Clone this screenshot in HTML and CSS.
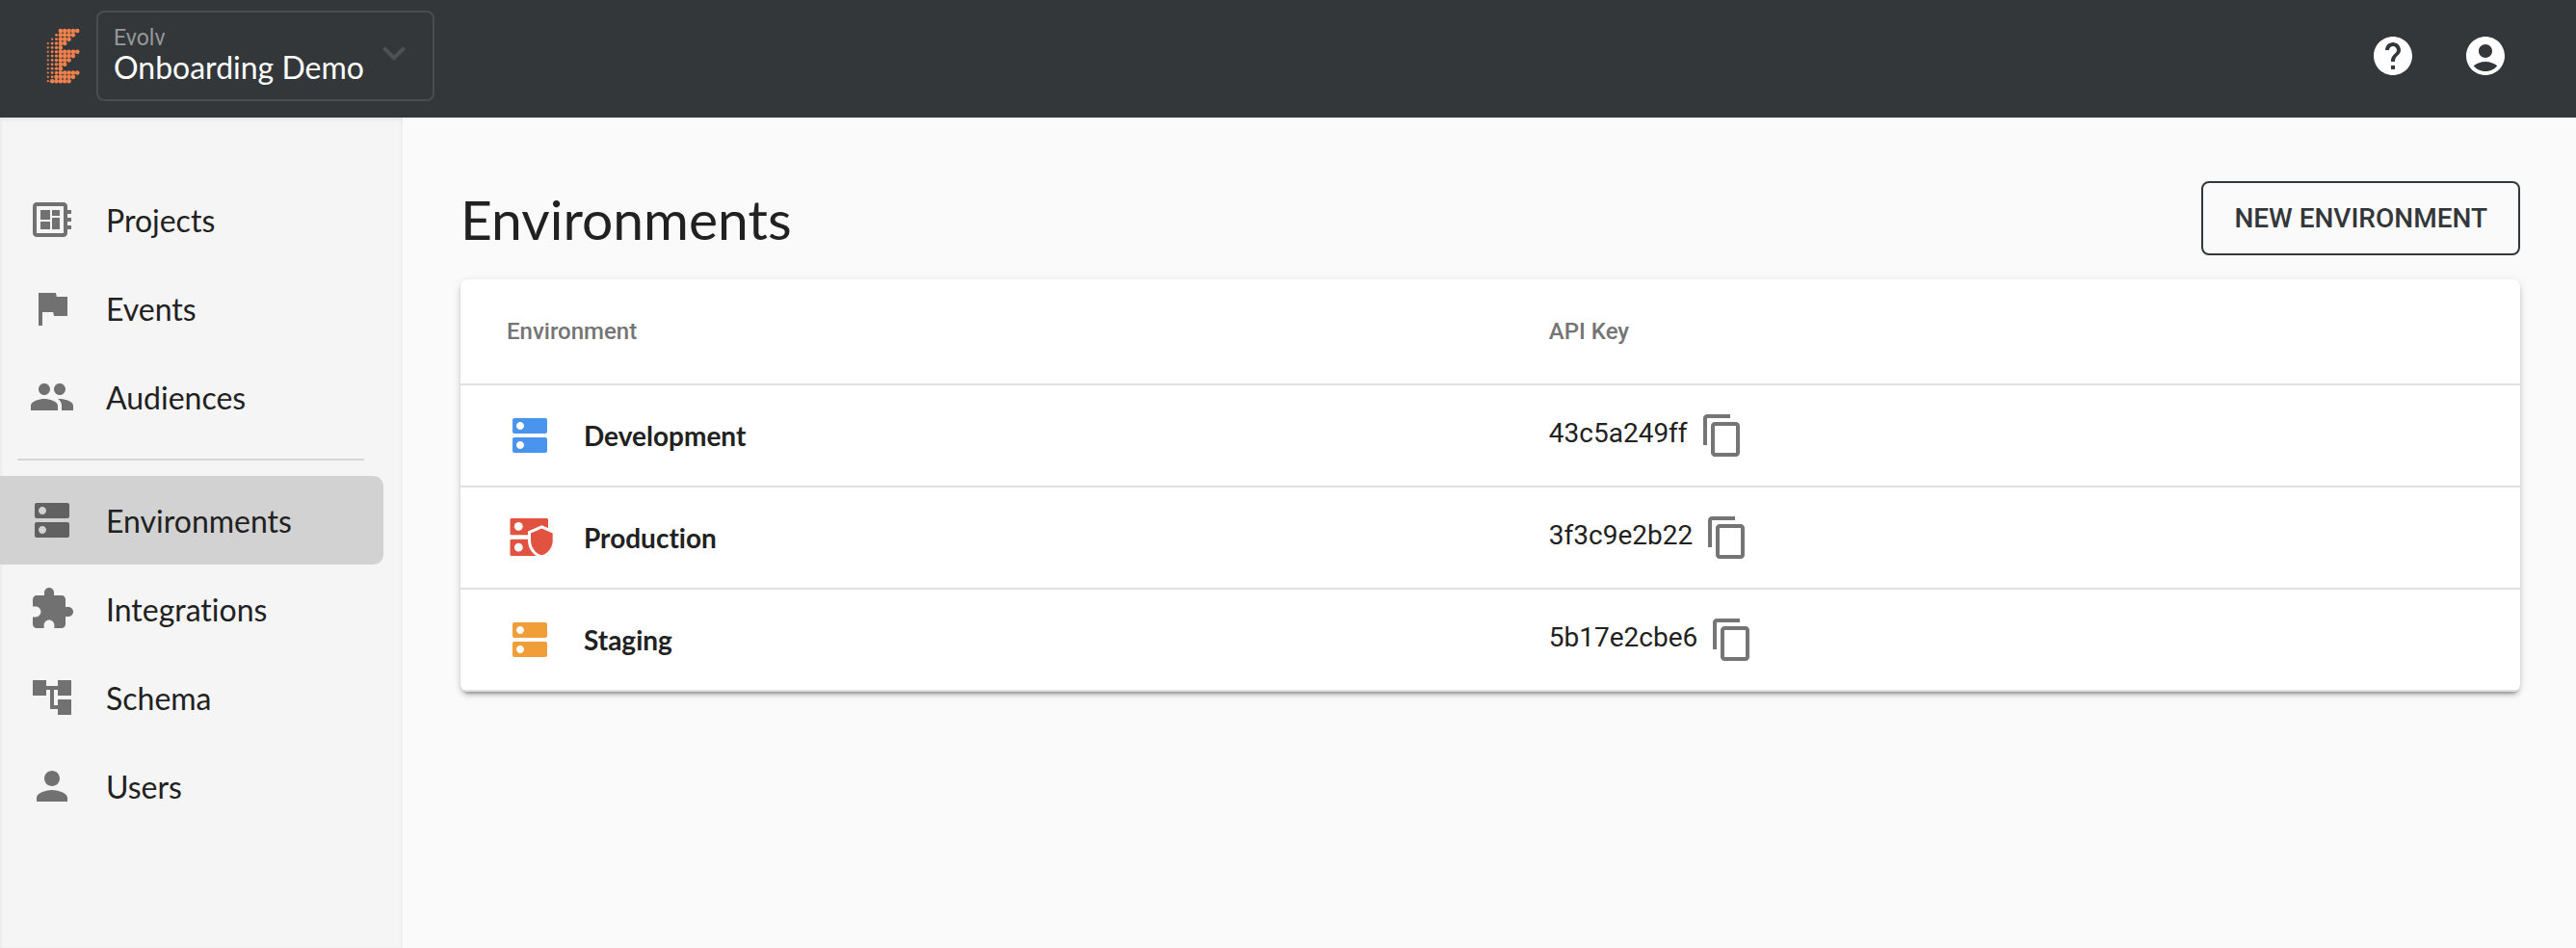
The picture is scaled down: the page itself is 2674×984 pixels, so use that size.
FILE: index.html
```
<!DOCTYPE html>
<html lang="en">
<head>
    <meta charset="UTF-8">
    <meta name="viewport" content="width=device-width, initial-scale=1.0">
    <title>Environments</title>
    <link rel="stylesheet" href="styles.css">
</head>
<body>
    <svg class="sprite" aria-hidden="true">
        <symbol id="dns" viewBox="0 0 24 24"><path d="M20 13H4c-.55 0-1 .45-1 1v6c0 .55.45 1 1 1h16c.55 0 1-.45 1-1v-6c0-.55-.45-1-1-1zM7 19c-1.1 0-2-.9-2-2s.9-2 2-2 2 .9 2 2-.9 2-2 2zM20 3H4c-.55 0-1 .45-1 1v6c0 .55.45 1 1 1h16c.55 0 1-.45 1-1V4c0-.55-.45-1-1-1zM7 9c-1.1 0-2-.9-2-2s.9-2 2-2 2 .9 2 2-.9 2-2 2z"/></symbol>
        <symbol id="copy" viewBox="0 0 24 24"><path d="M16 1H4c-1.1 0-2 .9-2 2v14h2V3h12V1zm3 4H8c-1.1 0-2 .9-2 2v14c0 1.1.9 2 2 2h11c1.1 0 2-.9 2-2V7c0-1.1-.9-2-2-2zm0 16H8V7h11v14z"/></symbol>
    </svg>

    <header class="topbar">
        <svg class="logo" id="logo" viewBox="0 0 36 58" role="img" aria-label="Evolv"></svg>
        <div class="org">
            <label class="org-label" for="org">Evolv</label>
            <select class="org-select" id="org">
                <option>Onboarding Demo</option>
            </select>
            <svg class="icon org-arrow" viewBox="0 0 24 24"><path d="M16.59 8.59L12 13.17 7.41 8.59 6 10l6 6 6-6z"/></svg>
        </div>
        <div class="actions">
            <button class="icon-btn" aria-label="Help">
                <svg class="icon" viewBox="0 0 24 24"><path d="M12 2C6.48 2 2 6.48 2 12s4.48 10 10 10 10-4.48 10-10S17.52 2 12 2zm1 17h-2v-2h2v2zm2.07-7.75l-.9.92C13.45 12.9 13 13.5 13 15h-2v-.5c0-1.1.45-2.1 1.17-2.83l1.24-1.26c.37-.36.59-.86.59-1.41 0-1.1-.9-2-2-2s-2 .9-2 2H8c0-2.21 1.79-4 4-4s4 1.79 4 4c0 .88-.36 1.68-.93 2.25z"/></svg>
            </button>
            <button class="icon-btn" aria-label="Account">
                <svg class="icon" viewBox="0 0 24 24"><path d="M12 2C6.48 2 2 6.48 2 12s4.48 10 10 10 10-4.48 10-10S17.52 2 12 2zm0 4c1.93 0 3.5 1.57 3.5 3.5S13.93 13 12 13s-3.5-1.57-3.5-3.5S10.07 6 12 6zm0 14c-2.03 0-4.43-.82-6.14-2.88C7.55 15.8 9.68 15 12 15s4.45.8 6.14 2.12C16.43 19.18 14.03 20 12 20z"/></svg>
            </button>
        </div>
    </header>

    <div class="layout">
        <nav class="sidebar">
            <a class="nav-item" href="#projects">
                <svg class="icon" viewBox="0 0 24 24"><path d="M22 9V7h-2V5c0-1.1-.9-2-2-2H4c-1.1 0-2 .9-2 2v14c0 1.1.9 2 2 2h14c1.1 0 2-.9 2-2v-2h2v-2h-2v-2h2v-2h-2V9h2zm-4 10H4V5h14v14zM6 13h5v4H6zm6-6h4v3h-4zM6 7h5v5H6zm6 4h4v6h-4z"/></svg>
                Projects
            </a>
            <a class="nav-item" href="#events">
                <svg class="icon" viewBox="0 0 24 24"><path d="M14.4 6L14 4H5v17h2v-7h5.6l.4 2h7V6z"/></svg>
                Events
            </a>
            <a class="nav-item" href="#audiences">
                <svg class="icon" viewBox="0 0 24 24"><path d="M16 11c1.66 0 2.99-1.34 2.99-3S17.66 5 16 5c-1.66 0-3 1.34-3 3s1.34 3 3 3zm-8 0c1.66 0 2.99-1.34 2.99-3S9.66 5 8 5C6.34 5 5 6.34 5 8s1.34 3 3 3zm0 2c-2.33 0-7 1.17-7 3.5V19h14v-2.5c0-2.33-4.67-3.5-7-3.5zm8 0c-.29 0-.62.02-.97.05 1.16.84 1.97 1.97 1.97 3.45V19h6v-2.5c0-2.33-4.67-3.5-7-3.5z"/></svg>
                Audiences
            </a>
            <hr class="nav-divider">
            <a class="nav-item active" href="#environments" aria-current="page">
                <svg class="icon"><use href="#dns"/></svg>
                Environments
            </a>
            <a class="nav-item" href="#integrations">
                <svg class="icon" viewBox="0 0 24 24"><path d="M20.5 11H19V7c0-1.1-.9-2-2-2h-4V3.5C13 2.12 11.88 1 10.5 1S8 2.12 8 3.5V5H4c-1.1 0-1.99.9-1.99 2v3.8H3.5c1.49 0 2.7 1.21 2.7 2.7s-1.21 2.7-2.7 2.7H2V20c0 1.1.9 2 2 2h3.8v-1.5c0-1.49 1.21-2.7 2.7-2.7 1.49 0 2.7 1.21 2.7 2.7V22H17c1.1 0 2-.9 2-2v-4h1.5c1.38 0 2.5-1.12 2.5-2.5S21.88 11 20.5 11z"/></svg>
                Integrations
            </a>
            <a class="nav-item" href="#schema">
                <svg class="icon" viewBox="0 0 24 24"><path d="M22 11V3h-7v3H9V3H2v8h7V8h2v10h4v3h7v-8h-7v3h-2V8h2v3z"/></svg>
                Schema
            </a>
            <a class="nav-item" href="#users">
                <svg class="icon" viewBox="0 0 24 24"><path d="M12 12c2.21 0 4-1.79 4-4s-1.79-4-4-4-4 1.79-4 4 1.79 4 4 4zm0 2c-2.67 0-8 1.34-8 4v2h16v-2c0-2.66-5.33-4-8-4z"/></svg>
                Users
            </a>
        </nav>

        <main class="content">
            <div class="page-head">
                <h1>Environments</h1>
                <button class="new-btn">NEW ENVIRONMENT</button>
            </div>
            <table class="card">
                <thead>
                    <tr>
                        <th class="col-env">Environment</th>
                        <th>API Key</th>
                    </tr>
                </thead>
                <tbody>
                    <tr>
                        <td>
                            <div class="env">
                                <svg class="icon blue"><use href="#dns"/></svg>
                                Development
                            </div>
                        </td>
                        <td>
                            <div class="key">
                                <span>43c5a249ff</span>
                                <button class="icon-btn copy" aria-label="Copy key"><svg class="icon"><use href="#copy"/></svg></button>
                            </div>
                        </td>
                    </tr>
                    <tr>
                        <td>
                            <div class="env">
                                <svg class="icon red" viewBox="0 0 48 48">
                                    <rect x="3.5" y="4" width="39.5" height="17.3" rx="1.5"/>
                                    <rect x="3.5" y="25.7" width="39.5" height="17.3" rx="1.5"/>
                                    <circle class="hole" cx="12.3" cy="12.3" r="4.4"/>
                                    <circle class="hole" cx="12.3" cy="34.2" r="4.4"/>
                                    <path class="shield-gap" d="M36.3 14.5l11.4 5V27c0 7-4.7 13.5-11.4 15.3C29.6 40.5 25 34 25 27v-7.5z"/>
                                    <path d="M36.3 14.5l11.4 5V27c0 7-4.7 13.5-11.4 15.3C29.6 40.5 25 34 25 27v-7.5z"/>
                                </svg>
                                Production
                            </div>
                        </td>
                        <td>
                            <div class="key">
                                <span>3f3c9e2b22</span>
                                <button class="icon-btn copy" aria-label="Copy key"><svg class="icon"><use href="#copy"/></svg></button>
                            </div>
                        </td>
                    </tr>
                    <tr>
                        <td>
                            <div class="env">
                                <svg class="icon orange"><use href="#dns"/></svg>
                                Staging
                            </div>
                        </td>
                        <td>
                            <div class="key">
                                <span>5b17e2cbe6</span>
                                <button class="icon-btn copy" aria-label="Copy key"><svg class="icon"><use href="#copy"/></svg></button>
                            </div>
                        </td>
                    </tr>
                </tbody>
            </table>
        </main>
    </div>

    <script src="logo.js"></script>
</body>
</html>
```
FILE: logo.js
```
// dot-matrix E: 0 = empty, 1-4 = dot size
const rows = [
    '00044444',
    '00244440',
    '01244400',
    '12344000',
    '12340000',
    '12344444',
    '12344440',
    '12344400',
    '12344000',
    '12340000',
    '12344444',
    '12444440',
    '14444400'
];
const radius = [0, 1.1, 1.4, 1.7, 2.3];
const logo = document.getElementById('logo');

rows.forEach((row, y) => {
    [...row].forEach((size, x) => {
        if (size === '0') return;
        const dot = document.createElementNS('http://www.w3.org/2000/svg', 'circle');
        dot.setAttribute('cx', 2.8 + x * 4.35);
        dot.setAttribute('cy', 3 + y * 4.35);
        dot.setAttribute('r', radius[size]);
        logo.appendChild(dot);
    });
});
```
FILE: styles.css
```
* {
    box-sizing: border-box;
}
body {
    margin: 0;
    min-height: 100vh;
    display: flex;
    flex-direction: column;
    background: #fafafa;
    color: #212121;
    font-family: Roboto, sans-serif;
    font-size: 28px;
    font-variant-ligatures: none;
}
.sprite {
    display: none;
}
.icon {
    display: block;
    flex: none;
    width: 48px;
    height: 48px;
    fill: currentColor;
}
.icon-btn {
    padding: 0;
    border: none;
    background: none;
    color: #fff;
    cursor: pointer;
}

/* top bar */
.topbar {
    display: flex;
    align-items: center;
    height: 122px;
    padding: 0 70px 6px 47px;
    background: #333739;
}
.logo {
    width: 36px;
    height: 58px;
    margin-right: 17px;
    fill: #f0814d;
}
.org {
    position: relative;
    width: 351px;
    height: 94px;
    padding: 16px;
    border: 2px solid #4a4d50;
    border-radius: 8px;
}
.org-label {
    display: block;
    font-size: 23px;
    line-height: 22px;
    color: #96989a;
}
.org-select {
    appearance: none;
    display: block;
    width: 100%;
    height: 38px;
    padding: 0;
    border: none;
    background: none;
    color: #fff;
    font-family: Lato, sans-serif;
    font-size: 32px;
    line-height: 38px;
}
.org-arrow {
    position: absolute;
    top: 18px;
    right: 16px;
    color: #4d5154;
    pointer-events: none;
}
.actions {
    display: flex;
    gap: 48px;
    margin-left: auto;
}

/* sidebar */
.layout {
    display: flex;
    flex: 1;
}
.sidebar {
    flex: none;
    width: 418px;
    padding: 60px 20px 0 0;
    background: #f5f5f5;
    box-shadow: inset 0 2px 4px rgba(0, 0, 0, 0.08);
}
.nav-item {
    display: flex;
    align-items: center;
    gap: 32px;
    height: 92px;
    padding-left: 30px;
    border-radius: 0 10px 10px 0;
    color: #212121;
    font-family: Lato, sans-serif;
    font-size: 32px;
    text-decoration: none;
}
.nav-item .icon {
    color: #717171;
}
.nav-item.active {
    background: #d2d2d2;
}
.nav-item.active .icon {
    color: #616161;
}
.nav-divider {
    height: 2px;
    margin: 18px 20px 16px 18px;
    border: none;
    background: #d6d6d6;
}

/* page */
.content {
    flex: 1;
    padding: 66px 58px 60px 60px;
}
.page-head {
    display: flex;
    align-items: center;
    justify-content: space-between;
    margin-bottom: 25px;
}
h1 {
    margin: 0;
    font-family: Lato, sans-serif;
    font-size: 57px;
    font-weight: 400;
    line-height: 72px;
}
.new-btn {
    height: 77px;
    padding: 0 32px;
    border: 2px solid #333739;
    border-radius: 8px;
    background: none;
    color: #333739;
    font-family: Roboto, sans-serif;
    font-size: 28px;
    font-weight: 500;
    cursor: pointer;
}
.card {
    width: 100%;
    border-spacing: 0;
    border-radius: 8px;
    overflow: hidden;
    background: #fff;
    box-shadow: 0 6px 2px -4px rgba(0, 0, 0, 0.2), 0 4px 4px rgba(0, 0, 0, 0.14), 0 2px 10px rgba(0, 0, 0, 0.12);
}
th, td {
    height: 106px;
    padding: 0 48px;
    border-bottom: 2px solid #e0e0e0;
    text-align: left;
}
th {
    height: 110px;
    color: #757575;
    font-size: 24px;
    font-weight: 500;
}
.col-env {
    width: 50.6%;
}
.env, .key {
    display: flex;
    align-items: center;
}
.env {
    gap: 32px;
    font-family: Lato, sans-serif;
    font-weight: 700;
}
.key {
    gap: 12px;
}
.key span {
    padding-bottom: 6px;
}
.copy {
    color: #757575;
}
.blue {
    color: #4994ec;
}
.red {
    color: #e15241;
}
.orange {
    color: #f19d38;
}
.hole {
    fill: #fff;
}
.shield-gap {
    fill: #fff;
    stroke: #fff;
    stroke-width: 6;
}
```
